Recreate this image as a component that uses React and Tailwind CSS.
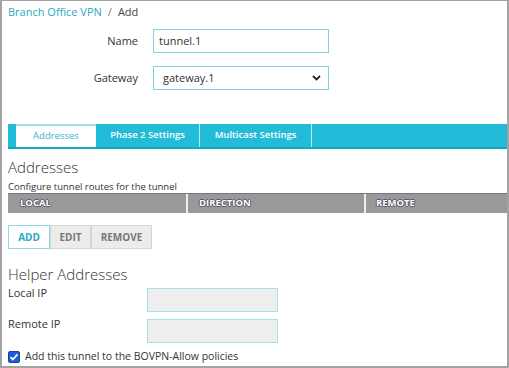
export default function App() {
  const font = { fontFamily: '"Open Sans", "Noto Sans", sans-serif' };
  return (
    <div
      className="w-[509px] h-[368px] bg-white border-t border-l-2 border-r-2 border-b-2 border-[#a3a3a3] overflow-hidden text-[#333]"
      style={font}
    >
      <div className="pl-[6px] pr-0">
        {/* breadcrumb */}
        <div className="h-[22px] pt-[4px] text-[11px] leading-[14px]">
          <span className="text-[#2aa8c6]">Branch Office VPN</span>
          <span className="text-[#777] px-[6px]">/</span>
          <span className="text-[#444]">Add</span>
        </div>

        {/* name / gateway */}
        <div className="mt-[6px] flex items-center">
          <label className="w-[130px] text-right text-[11px]">Name</label>
          <div className="ml-[15px] w-[176px] h-[24px] border border-[#7fd4e2] flex items-center px-[5px] text-[11px]">
            tunnel.1
          </div>
        </div>
        <div className="mt-[13px] flex items-center">
          <label className="w-[130px] text-right text-[11px]">Gateway</label>
          <div className="ml-[15px] w-[176px] h-[24px] border border-[#7fd4e2] flex items-center justify-between pl-[9px] pr-[7px] text-[11px]">
            <span>gateway.1</span>
            <svg width="9" height="6" viewBox="0 0 9 6">
              <path d="M1 1l3.5 3.5L8 1" fill="none" stroke="#222" strokeWidth="1.8" />
            </svg>
          </div>
        </div>

        {/* tabs */}
        <div className="mt-[34px] h-[25px] bg-[#22bcd8] border-b-2 border-[#16a9c4] flex pl-[8px]">
          <div className="w-[80px] h-[23px] bg-white border-t-2 border-[#9ee0ea] text-[#39b3d0] text-[9.5px] flex items-center justify-center">
            Addresses
          </div>
          <div className="w-[104px] border-r border-[#bfeaf2] text-white font-semibold text-[9.5px] flex items-center justify-center">
            Phase 2 Settings
          </div>
          <div className="w-[112px] border-r border-[#bfeaf2] text-white font-semibold text-[9.5px] flex items-center justify-center">
            Multicast Settings
          </div>
        </div>

        {/* addresses */}
        <div className="mt-[8px] text-[15px] leading-[20px] font-light text-[#333]">Addresses</div>
        <div className="text-[9.5px] leading-[13px] mt-[3px]">Configure tunnel routes for the tunnel</div>
        <div
          className="h-[20px] bg-[#999] flex border-t border-[#777] text-white font-bold text-[9.5px]"
          style={{ textShadow: '1px 0 0 #5a5a6a, -1px 0 0 #5a5a6a, 0 1px 0 #5a5a6a, 0 -1px 0 #5a5a6a' }}
        >
          <div className="w-[180px] border-r-2 border-[#eee] flex items-center pl-[12px]">LOCAL</div>
          <div className="w-[178px] border-r-2 border-[#eee] flex items-center pl-[11px]">DIRECTION</div>
          <div className="flex-1 flex items-center pl-[10px]">REMOTE</div>
        </div>

        <div className="mt-[12px] flex">
          <div className="w-[42px] h-[24px] border border-[#8fd7e4] bg-white text-[#2aa8c6] font-bold text-[10px] flex items-center justify-center">
            ADD
          </div>
          <div className="w-[41px] h-[24px] border border-[#d5d5d5] bg-[#ececec] text-[#777] font-bold text-[10px] flex items-center justify-center">
            EDIT
          </div>
          <div className="w-[61px] h-[24px] border border-[#d5d5d5] bg-[#ececec] text-[#777] font-bold text-[10px] flex items-center justify-center">
            REMOVE
          </div>
        </div>

        {/* helper */}
        <div className="mt-[15px] text-[15px] leading-[20px] font-light">Helper Addresses</div>
        <div className="flex items-start mt-[2px]">
          <label className="w-[139px] text-[11px] leading-[14px]">Local IP</label>
          <div className="w-[131px] h-[24px] mt-[2px] border border-[#a8e0ea] bg-[#eeeeee]" />
        </div>
        <div className="flex items-start mt-[5px]">
          <label className="w-[139px] text-[11px] leading-[14px]">Remote IP</label>
          <div className="w-[131px] h-[24px] mt-[2px] border border-[#a8e0ea] bg-[#eeeeee]" />
        </div>
        <div className="mt-[7px] flex items-center">
          <svg width="12" height="12" viewBox="0 0 12 12">
            <rect x="0.5" y="0.5" width="11" height="11" rx="1.5" fill="#1a5fd6" stroke="#1046a8" />
            <path d="M2.6 6.2l2.2 2.3L9.5 3.4" fill="none" stroke="#fff" strokeWidth="1.8" />
          </svg>
          <span className="ml-[5px] text-[10.5px] leading-[13px]">Add this tunnel to the BOVPN-Allow policies</span>
        </div>
      </div>
    </div>
  );
}
